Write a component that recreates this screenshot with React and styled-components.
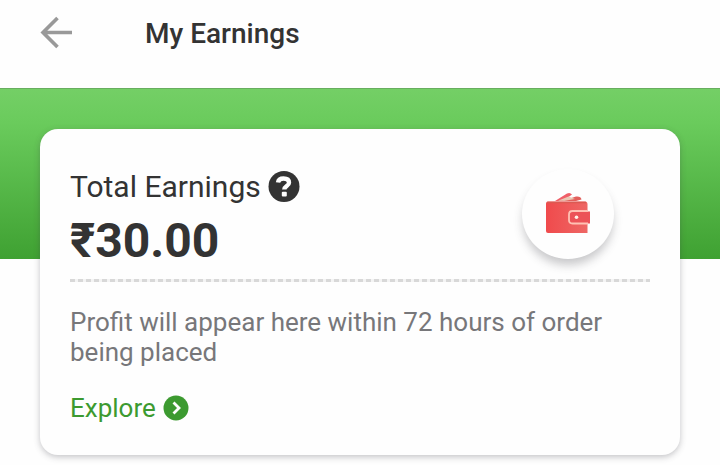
import React from "react";
import styled, { createGlobalStyle } from "styled-components";

const GlobalStyle = createGlobalStyle`
  * {
    box-sizing: border-box;
  }

  body {
    margin: 0;
    background-color: #fefefe;
    color: #333333;
    font-family: Roboto, "Liberation Sans", sans-serif;
  }
`;

const Header = styled.header`
  display: flex;
  align-items: flex-start;
  gap: 72px;
  height: 88px;
  padding: 16px 40px;
  background-color: #fefefe;
`;

const IconButton = styled.button`
  display: flex;
  flex-shrink: 0;
  padding: 0;
  border: 0;
  background: none;
  color: ${({ $color }) => $color || "#333333"};
  cursor: pointer;

  svg {
    display: block;
  }
`;

const Title = styled.h1`
  margin: 0;
  font-size: 28px;
  font-weight: 500;
  line-height: 36px;
`;

const Banner = styled.main`
  padding: 40px 40px 24px;
  border-top: 1px solid #68ad5f;
  background: linear-gradient(#74cf66, #6acb5c 20%, #3fa132) no-repeat;
  background-size: 100% 170px;
`;

const Card = styled.section`
  padding: 40px 30px 30px;
  border-radius: 18px;
  background-color: #fefefe;
  box-shadow: 0 2px 6px rgba(60, 60, 70, 0.3);
`;

const Summary = styled.div`
  display: flex;
  align-items: flex-start;
  justify-content: space-between;
`;

const Label = styled.div`
  display: flex;
  align-items: center;
  gap: 7px;
  font-size: 30px;
  line-height: 36px;
`;

const Amount = styled.p`
  margin: 8px 0 0;
  font-size: 48px;
  font-weight: 700;
  line-height: 56px;
`;

const WalletBadge = styled.div`
  display: flex;
  align-items: center;
  justify-content: center;
  width: 92px;
  height: 90px;
  margin-right: 36px;
  border-radius: 50%;
  background-color: #fefefe;
  box-shadow: 0 7px 10px -1px rgba(60, 60, 70, 0.28);
`;

const Divider = styled.hr`
  height: 3px;
  margin: 10px 0 0;
  border: 0;
  background: repeating-linear-gradient(90deg, #d8d8d8 0 5px, #f4f4f4 5px 8px);
`;

const Note = styled.p`
  margin: 25px 0 0;
  color: #77777a;
  font-size: 26px;
  line-height: 30px;
`;

const ExploreLink = styled.a`
  display: inline-flex;
  align-items: center;
  gap: 7px;
  margin-top: 24px;
  color: #3c9a30;
  font-size: 26px;
  line-height: 34px;
  text-decoration: none;
`;

function BackArrow() {
  return (
    <svg width="33" height="33" viewBox="0 0 33 33" fill="none" stroke="currentColor" strokeWidth="3.6">
      <path d="M32 16.5H3M17.500 2L3 16.500L17.500 31" />
    </svg>
  );
}

function HelpIcon() {
  return (
    <svg width="32" height="32" viewBox="0 0 32 32" fill="none">
      <circle cx="16" cy="15.5" r="15.5" fill="currentColor" />
      <path d="M10 11.500C10.500 8.300 12.500 7.500 15.500 7.500C19 7.500 21 9.100 21 11.700C21 15 16.300 15 16.300 18.500" stroke="#fefefe" strokeWidth="4.400" />
      <rect x="13.800" y="20.800" width="5" height="4.600" rx="1" fill="#fefefe" />
    </svg>
  );
}

function WalletIcon() {
  return (
    <svg width="46" height="44" viewBox="0 0 46 44" fill="none">
      <defs>
        <linearGradient id="leather" x1="0" y1="0" x2="1" y2="0">
          <stop offset="0" stopColor="#f04a4c" />
          <stop offset="1" stopColor="#ee6765" />
        </linearGradient>
      </defs>
      <path d="M10 9L22 1.500Q25 0 27 2.500L18 9Z" fill="#ef5f68" />
      <path d="M17 9L31 4.500Q36 4 36.500 7.500L31 9Z" fill="#e2605c" />
      <path d="M13 8.700L23.500 4.500L30 7L20 8.700Z" fill="#e9c8b4" />
      <path d="M3 9.500H40Q42.500 9.500 42.500 12.500V41H3Q1 41 1 39V11.500Q1 9.500 3 9.500Z" fill="url(#leather)" />
      <path d="M2 10.500H41" stroke="#db5a52" strokeWidth="1.500" />
      <path d="M45 19.500H27.500Q24 19.500 24 23V28Q24 31.500 27.500 31.500H45Z" fill="#ec5358" />
      <path d="M43 19H27.500Q24 19 24 22.500V28Q24 31.500 27.500 31.500H43" stroke="#ffc1b4" strokeWidth="1.800" />
      <circle cx="31.500" cy="25.300" r="1.800" fill="#fff2e9" />
    </svg>
  );
}

function ExploreIcon() {
  return (
    <svg width="26" height="26" viewBox="0 0 26 26" fill="none">
      <circle cx="13" cy="13" r="12.500" fill="currentColor" />
      <path d="M10.500 7.500L16 13L10.500 18.500" stroke="#fefefe" strokeWidth="2.800" />
    </svg>
  );
}

function App() {
  return (
    <>
      <GlobalStyle />
      <Header>
        <IconButton type="button" aria-label="Back" $color="#999999">
          <BackArrow />
        </IconButton>
        <Title>My Earnings</Title>
      </Header>
      <Banner>
        <Card>
          <Summary>
            <div>
              <Label>
                Total Earnings
                <IconButton type="button" aria-label="About total earnings">
                  <HelpIcon />
                </IconButton>
              </Label>
              <Amount>₹30.00</Amount>
            </div>
            <WalletBadge>
              <WalletIcon />
            </WalletBadge>
          </Summary>
          <Divider />
          <Note>Profit will appear here within 72 hours of order being placed</Note>
          <ExploreLink href="#explore">
            Explore
            <ExploreIcon />
          </ExploreLink>
        </Card>
      </Banner>
    </>
  );
}

export default App;
